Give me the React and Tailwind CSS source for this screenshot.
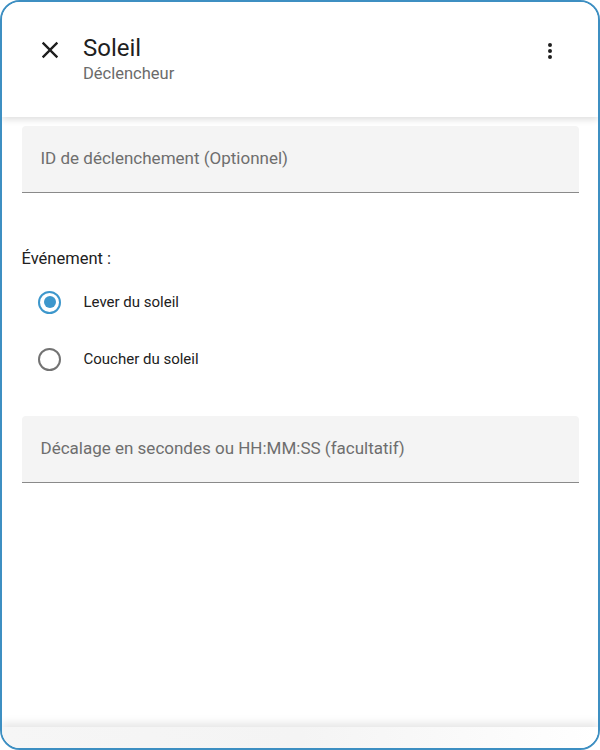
import React, { useState } from 'react';

const font = { fontFamily: 'Roboto, "Noto Sans", sans-serif' };

function TextField({ label }) {
    return (
        <div className="h-[67px] bg-[#f4f4f4] rounded-t-[4px] border-b border-[#8a8a8a] flex items-center px-[19px]">
            <span className="text-[17px] text-[#6e6e6e]">{label}</span>
        </div>
    );
}

function Radio({ checked, label, onClick }) {
    return (
        <div className="flex items-center h-[57px] cursor-pointer" onClick={onClick}>
            <div className="w-[56px] flex justify-center">
                {checked ? (
                    <div className="w-[23px] h-[23px] rounded-full border-2 border-[#3d97cc] flex items-center justify-center">
                        <div className="w-[12px] h-[12px] rounded-full bg-[#3d97cc]" />
                    </div>
                ) : (
                    <div className="w-[23px] h-[23px] rounded-full border-2 border-[#737373]" />
                )}
            </div>
            <span className="ml-[6px] text-[15px] text-[#212121]">{label}</span>
        </div>
    );
}

export default function App() {
    const [event, setEvent] = useState('sunrise');

    return (
        <div style={font} className="w-[600px] h-[750px] bg-white">
            <div className="w-full h-full border-[2.5px] border-[#3d8fc2] rounded-[20px] overflow-hidden flex flex-col">
                <div className="h-[115px] shrink-0 flex items-start pt-[31px] pl-[34px] pr-[36px] shadow-[0_3px_6px_rgba(0,0,0,0.12)] relative z-10 bg-white">
                    <svg width="28" height="28" viewBox="0 0 24 24" className="mt-[3px]">
                        <path fill="#1f1f1f" d="M19,6.41L17.59,5L12,10.59L6.41,5L5,6.41L10.59,12L5,17.59L6.41,19L12,13.41L17.59,19L19,17.59L13.41,12L19,6.41Z" />
                    </svg>
                    <div className="ml-[19px] flex flex-col flex-1">
                        <span className="text-[24px] leading-[30px] text-[#1f1f1f]">Soleil</span>
                        <span className="text-[16.5px] leading-[20px] text-[#6b6b6b] mt-[1px]">Déclencheur</span>
                    </div>
                    <svg width="24" height="24" viewBox="0 0 24 24" className="mt-[6px]">
                        <path fill="#1f1f1f" d="M12,16A2,2 0 0,1 14,18A2,2 0 0,1 12,20A2,2 0 0,1 10,18A2,2 0 0,1 12,16M12,10A2,2 0 0,1 14,12A2,2 0 0,1 12,14A2,2 0 0,1 10,12A2,2 0 0,1 12,10M12,4A2,2 0 0,1 14,6A2,2 0 0,1 12,8A2,2 0 0,1 10,6A2,2 0 0,1 12,4Z" />
                    </svg>
                </div>

                <div className="flex-1 px-[19.5px] pt-[9px]">
                    <TextField label="ID de déclenchement (Optionnel)" />
                    <div className="mt-[54px] text-[16.5px] text-[#212121]">Événement :</div>
                    <div className="mt-[2px]">
                        <Radio checked={event === 'sunrise'} label="Lever du soleil" onClick={() => setEvent('sunrise')} />
                        <Radio checked={event === 'sunset'} label="Coucher du soleil" onClick={() => setEvent('sunset')} />
                    </div>
                    <div className="mt-[28px]">
                        <TextField label="Décalage en secondes ou HH:MM:SS (facultatif)" />
                    </div>
                </div>

                <div className="h-[21px] shrink-0 bg-gradient-to-r from-[#f6f6f6] via-[#f4f4f4] to-white shadow-[0_-4px_8px_rgba(0,0,0,0.1)]" />
            </div>
        </div>
    );
}
